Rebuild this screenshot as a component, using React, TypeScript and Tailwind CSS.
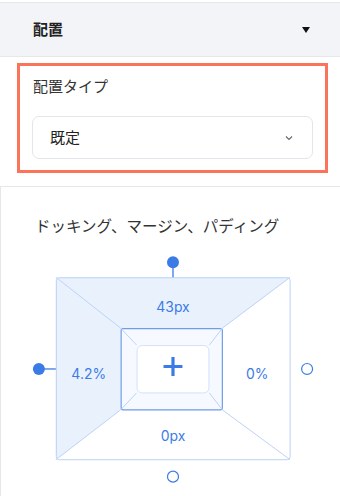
export default function App() {
  const blue = "#3b7be6"
  const line = "#bcd2f7"
  return (
    <div className="w-[340px] h-[496px] bg-white overflow-hidden font-['Noto_Sans_CJK_JP',sans-serif]">
      <div className="mt-[2px] h-[55px] bg-[#f3f4f8] border-y border-[#e6e7eb] flex items-center justify-between pl-[33px] pr-[29px]">
        <span className="text-[15px] font-bold text-[#222]">配置</span>
        <svg width="10" height="8" viewBox="0 0 10 8">
          <path d="M1 1h8L5 7z" fill="#111" />
        </svg>
      </div>

      <div className="pl-[17px] pr-[12px] pt-[6px] pb-[13px]">
        <div className="border-[3px] border-[#fb7358] px-[12px] pt-[9px] pb-[11px]">
          <div className="pl-[1px] text-[15px] text-[#333] leading-[22px]">配置タイプ</div>
          <div className="mt-[19px] h-[43px] rounded-[7px] border border-[#e3e5ea] flex items-center justify-between pl-[17px] pr-[19px]">
            <span className="text-[15px] text-[#222]">既定</span>
            <svg width="8" height="6" viewBox="0 0 8 6">
              <path d="M1 1.5l3 3 3-3" stroke="#666" strokeWidth="1.1" fill="none" />
            </svg>
          </div>
        </div>
      </div>

      <div className="border-t border-l border-[#e6e7eb] h-[320px] pt-[27px]">
        <div className="pl-[34px] text-[15.5px] text-[#333] leading-[22px]">ドッキング、マージン、パディング</div>
        <div className="mt-0 flex justify-center">
          <svg width="340" height="250" viewBox="0 236 340 250" className="font-['Inter',sans-serif]">
            {/* top */}
            <path d="M55 277H290L222 328H120Z" fill="#e9f1fd" />
            {/* left */}
            <path d="M55 277L120 328V410L55 460Z" fill="#e9f1fd" />
            {/* outer */}
            <rect x="55.5" y="277.5" width="234.5" height="182.5" rx="3" fill="none" stroke={line} strokeWidth="1" />
            <path d="M55 277L120 328M290 277L222 328M55 460L120 410M290 460L222 410" stroke={line} strokeWidth="1" />
            {/* inner */}
            <rect x="120.5" y="328.5" width="101.5" height="81.5" rx="2" fill="#f6f9ff" stroke="#6f9ce8" strokeWidth="1.2" />
            <path d="M120 328L136 345M222 328L209 345M120 410L136 393M222 410L209 393" stroke={line} strokeWidth="1" />
            <rect x="136.5" y="345.5" width="72" height="47.5" rx="5" fill="#fff" stroke="#d3e1f9" strokeWidth="1" />
            <path d="M172.5 357v19M163 366.5h19" stroke={blue} strokeWidth="3.2" />
            {/* handles */}
            <line x1="172.5" y1="266" x2="172.5" y2="277" stroke={blue} strokeWidth="1.3" />
            <circle cx="172.5" cy="262" r="6" fill={blue} />
            <line x1="42" y1="369" x2="55" y2="369" stroke={blue} strokeWidth="1.3" />
            <circle cx="38" cy="369" r="6" fill={blue} />
            <circle cx="307" cy="369" r="5.5" fill="#fff" stroke={blue} strokeWidth="1.2" />
            <circle cx="172.5" cy="477" r="5.5" fill="#fff" stroke={blue} strokeWidth="1.2" />
            {/* labels */}
            <text x="172.5" y="312" textAnchor="middle" fontSize="14" fill={blue}>43px</text>
            <text x="88" y="379" textAnchor="middle" fontSize="14" fill={blue}>4.2%</text>
            <text x="257" y="379" textAnchor="middle" fontSize="14" fill={blue}>0%</text>
            <text x="172.5" y="441" textAnchor="middle" fontSize="14" fill={blue}>0px</text>
          </svg>
        </div>
      </div>
    </div>
  )
}
